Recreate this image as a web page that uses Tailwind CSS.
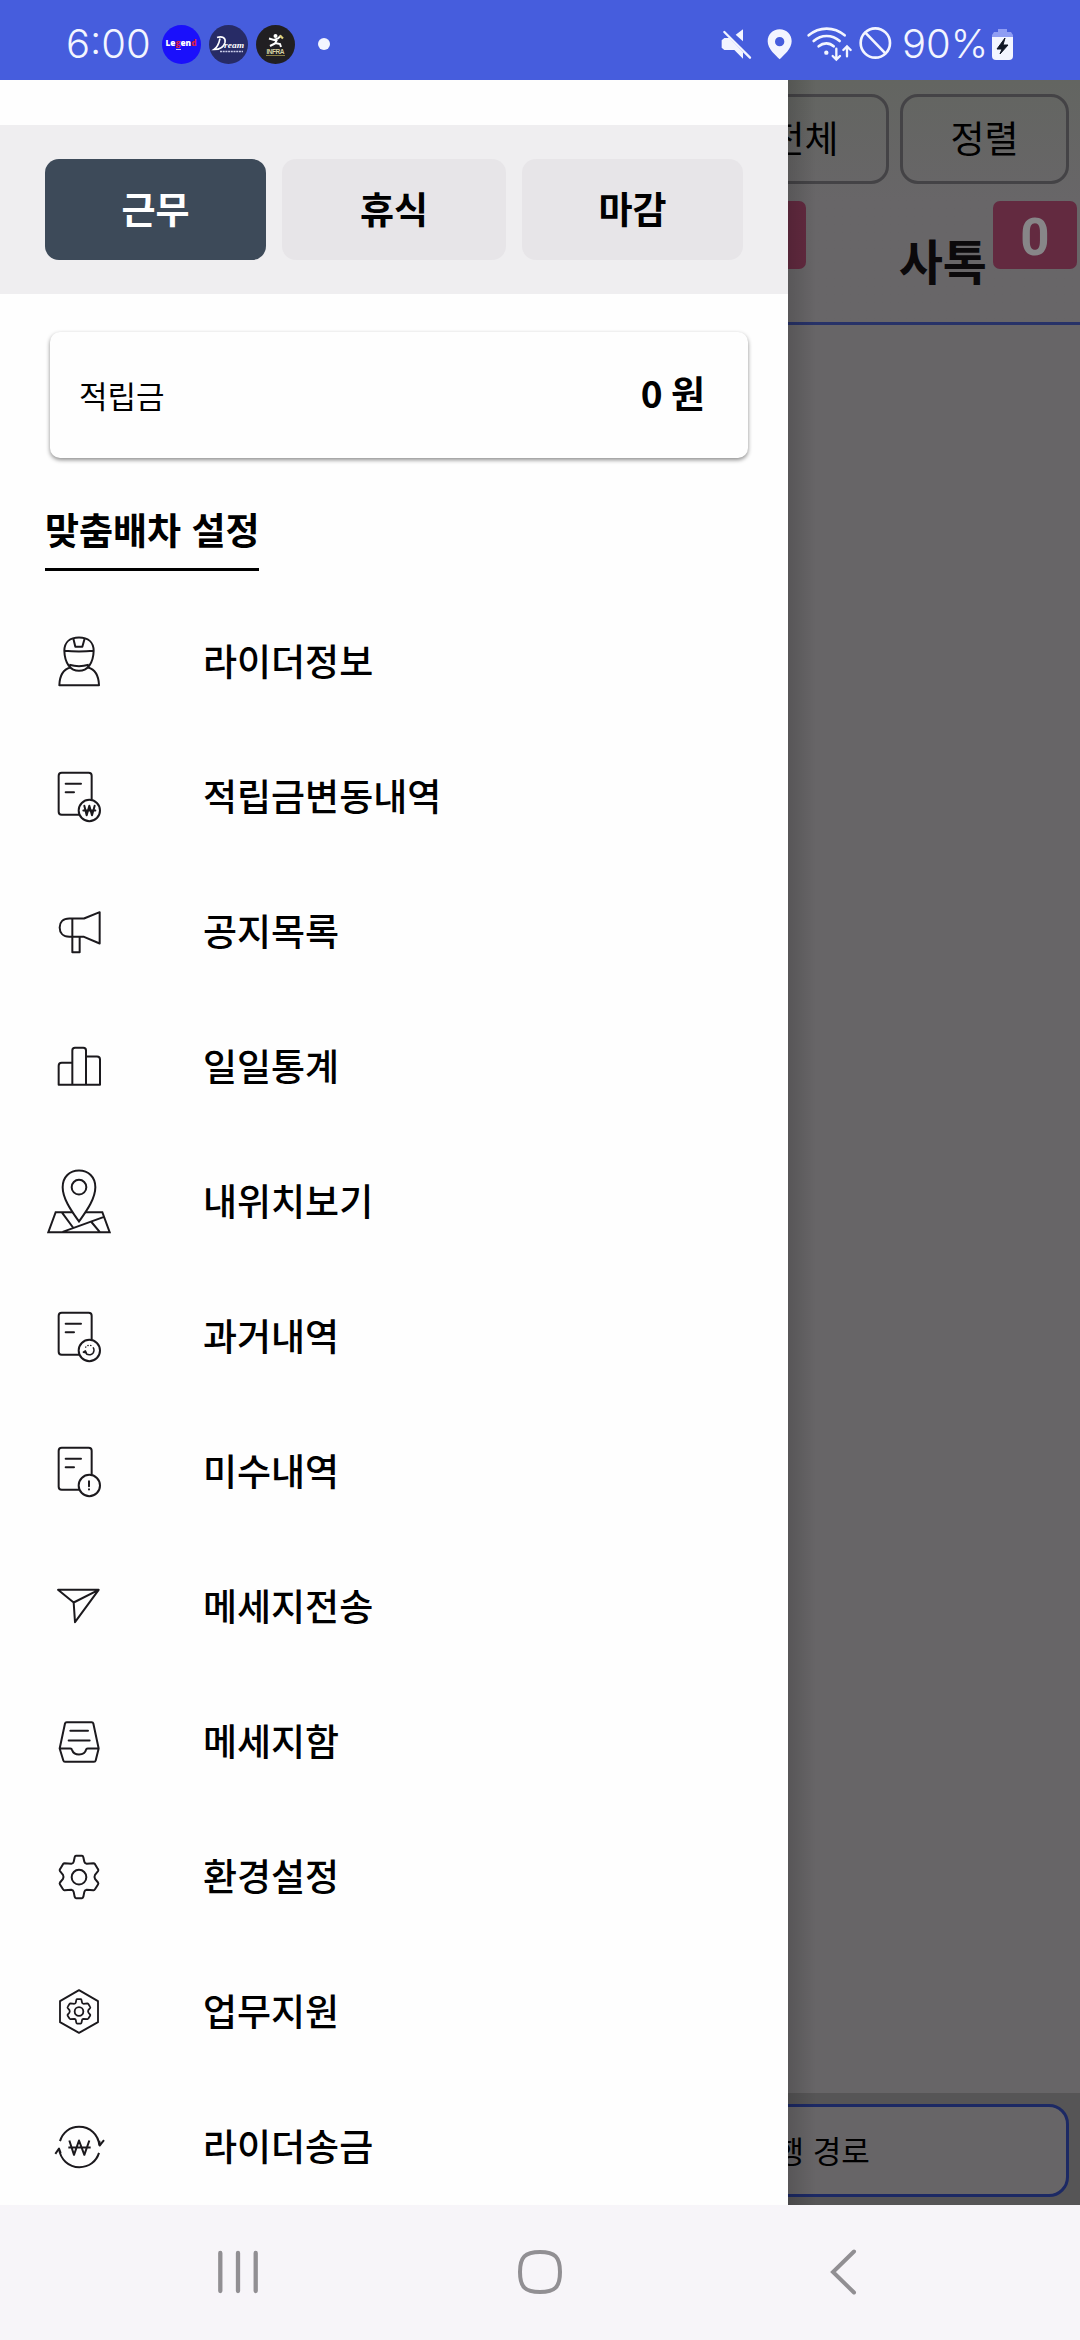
<!DOCTYPE html>
<html lang="ko">
<head>
<meta charset="utf-8">
<title>맞춤배차 설정</title>
<script src="https://cdn.jsdelivr.net/npm/@tailwindcss/browser@4"></script>
</head>
<body class="flex h-[2340px] w-[1080px] flex-col overflow-hidden bg-white font-['Noto_Sans_CJK_KR',sans-serif] text-black">

<!-- Status bar -->
<header class="flex h-20 shrink-0 items-center bg-[#465ddd] pt-2 pr-[67px] pl-[66px] font-['Inter',sans-serif] text-[40px] leading-none text-[#f3f5ff]">
  <span class="w-[96px] font-[350]">6:00</span>
  <div class="flex items-center gap-2">
    <svg class="size-[39px]" viewBox="0 0 39 39"><circle cx="19.5" cy="19.5" r="19.5" fill="#1a10fb"/><text x="3.5" y="21" font-family="Open Sans" font-size="9.500" font-weight="800" fill="#fff" textLength="31" lengthAdjust="spacingAndGlyphs">Le<tspan fill="#d81f48">g</tspan>en<tspan fill="#d81f48">d</tspan></text><path d="M14 24.500h5" stroke="#c9c3ff" stroke-width="1"/></svg>
    <svg class="size-[39px]" viewBox="0 0 39 39"><circle cx="19.500" cy="19.500" r="19.500" fill="#272b66"/><path d="M8 12.500c5-1.500 9 0 8 5-1 4-5 7-11 7 3-2 5-6 6-11" fill="none" stroke="#fff" stroke-width="1.600"/><text x="15" y="23" font-family="Liberation Serif" font-size="9" font-style="italic" font-weight="700" fill="#fff" textLength="20" lengthAdjust="spacingAndGlyphs">ream</text><path d="M11 26.500h23" stroke="#c9cbe8" stroke-width="1.300" stroke-dasharray="2 .7"/></svg>
    <svg class="size-[39px]" viewBox="0 0 39 39"><circle cx="19.500" cy="19.500" r="19.500" fill="#211f22"/><circle cx="19.500" cy="11" r="2" fill="#fff"/><path d="M13 13.500l5 1.500 4-1.500 3-3M21 14.500l-2 4-5 2.500M19 18l5 1 1 3" fill="none" stroke="#fff" stroke-width="2"/><path d="M24 10.500l3 3" stroke="#e0d27a" stroke-width="2.200"/><text x="10.500" y="28.500" font-family="Liberation Sans" font-size="6.500" font-weight="700" fill="#d8d1a2" textLength="18">INFRA</text><path d="M10 30.500h19" stroke="#8a7f45" stroke-width="1"/></svg>
  </div>
  <span class="ml-[23px] size-3 rounded-full bg-[#f3f5ff]"></span>
  <div class="ml-auto flex items-center">
    <svg class="h-9 w-[174px]" viewBox="115 77 522 108" fill="none" stroke="#f3f5ff" stroke-width="7" stroke-linecap="round">
      <path d="M120 120l8-7h15l41 43v19l-26-26h-30l-8-7z" fill="#f3f5ff" stroke="none"/>
      <path d="M184 87v36l-22-20z" fill="#f3f5ff" stroke="none"/>
      <path d="M128 95l77 77"/>
      <path fill-rule="evenodd" d="M294 87c-21 0-36 15-36 36 0 23 24 42 36 54 12-12 36-31 36-54 0-21-15-36-36-36zm0 23a14 14 0 1 1 0 28 14 14 0 0 1 0-28z" fill="#f3f5ff" stroke="none"/>
      <path d="M381 105c32-27 76-27 108 0M396 122c23-20 55-20 78 0M411 138c14-12 32-12 45 0" stroke-width="8"/>
      <circle cx="434" cy="157" r="6.500" fill="#f3f5ff" stroke="none"/>
      <path d="M464 145v32M453 167l11 11 11-11M496 168v-30M485 149l11-11 11 11" stroke-width="7"/>
      <circle cx="581" cy="128" r="44" stroke-width="8"/><path d="M551 97l60 62" stroke-width="8"/>
    </svg>
    <span class="ml-[8px] w-[90px] font-[350]">90%</span>
    <svg class="h-[31px] w-[21px]" viewBox="0 0 21 31"><path d="M6 0h9v3h4l2 3v2H0V6l2-3h4z" fill="#8f9df3"/><path d="M0 8h21v19q0 4-4 4H4q-4 0-4-4z" fill="#f3f5ff"/><path d="M13 9L5 20h5L8 25l8-9h-5z" fill="#101625" stroke="#101625" stroke-width="1"/></svg>
  </div>
</header>

<main class="relative h-[2125px] shrink-0 overflow-hidden bg-[#676567]">
  <!-- Dimmed order list behind the drawer -->
  <div class="flex h-full flex-col">
    <div class="flex h-[245px] shrink-0 flex-col border-b-3 border-[#273268] bg-linear-to-b from-[#636561] to-[#686668] to-50%">
      <div class="flex justify-end gap-[11px] pt-[14px] pr-[11px] text-[37px]">
        <div class="flex h-[90px] w-[169px] items-center justify-center rounded-[18px] border-3 border-[#444346] pb-1 leading-none"><span>전체</span></div>
        <div class="flex h-[90px] w-[169px] items-center justify-center rounded-[18px] border-3 border-[#444346] pb-1 leading-none"><span>정렬</span></div>
      </div>
      <div class="flex justify-end gap-[6px] pt-[17px] pr-[3px]">
        <div class="mr-[87px] h-[68px] w-[84px] rounded-[7px] bg-[#632a40]"></div>
        <span class="mt-[31px] text-[48px] leading-[54px] font-bold text-[#0b090b]">사톡</span>
        <div class="flex h-[68px] w-[84px] items-center justify-center rounded-[7px] bg-[#632a40] pt-1 font-['Roboto',sans-serif] text-[51px] leading-none font-bold text-[#878688]">0</div>
      </div>
    </div>
    <div class="flex-1"></div>
    <div class="h-[112px] shrink-0 bg-[#565556] pt-[11px] pr-[11px]">
      <div class="flex h-[93px] items-center rounded-[20px] border-3 border-[#1c2964] bg-[#676567] pb-0.5 pl-[744px] text-[31px] leading-none"><span>운행 경로</span></div>
    </div>
  </div>

  <!-- Drawer -->
  <aside class="absolute top-0 left-0 flex h-full w-[788px] flex-col bg-[#fefefe] pt-[45px]">
    <div class="flex h-[169px] shrink-0 items-center gap-4 bg-[#efeef0] pl-[45px] text-[37px] leading-none font-bold">
      <button class="h-[101px] w-[221px] rounded-[14px] bg-[#3d4a59] pb-0.5 text-white">근무</button>
      <button class="h-[101px] w-[224px] rounded-[14px] bg-[#e7e5e8] pb-0.5">휴식</button>
      <button class="h-[101px] w-[221px] rounded-[14px] bg-[#e7e5e8] pb-0.5">마감</button>
    </div>
    <div class="mt-[38px] ml-[50px] flex h-[126px] w-[698px] shrink-0 items-center justify-between rounded-[10px] bg-[#fefefe] pr-[43px] pl-[29px] leading-none shadow-[0_2px_4px_rgba(0,0,0,0.45)]">
      <span class="pb-[2px] text-[31px]">적립금</span>
      <span class="pb-[6px] text-[37px] font-bold [word-spacing:-2px]">0 원</span>
    </div>
    <h1 class="mt-[41px] ml-[45px] h-[72px] w-[214px] shrink-0 border-b-3 border-black pt-[9px] text-[37px] leading-[42px] font-bold whitespace-nowrap">맞춤배차 설정</h1>
    <nav class="mt-[23px] flex flex-col text-[37px] leading-none font-medium">
      <a class="flex h-[135px] shrink-0 items-center gap-[88px] pl-[43px]">
        <svg class="size-[72px]" viewBox="39 46.5 216 216" fill="none" stroke="#1b191d" stroke-width="6" stroke-linejoin="round"><path d="M103 121c0-26 17-40 44-40s44 14 44 40q-44 4-88 0zM103 121c1 38 19 60 44 60s43-22 44-60M118 163q29 8 58 0M130 84l6 25h21l7-25M121 171c-22 6-32 25-33 53h119c-1-28-11-47-33-53"/></svg>
        <span class="pb-0.5">라이더정보</span>
      </a>
      <a class="flex h-[135px] shrink-0 items-center gap-[88px] pl-[43px]">
        <svg class="size-[72px]" viewBox="39 451.5 216 216" fill="none" stroke="#1b191d" stroke-width="6" stroke-linecap="round" stroke-linejoin="round"><path d="M146 613H95q-9 0-9-9V496q0-9 9-9h81q9 0 9 9v70M107 520h46M107 545h25"/><circle cx="178" cy="600" r="32"/><path d="M163 586l7 28 8-28 8 28 8-28M160 600h36"/></svg>
        <span class="pb-0.5">적립금변동내역</span>
      </a>
      <a class="flex h-[135px] shrink-0 items-center gap-[88px] pl-[43px]">
        <svg class="size-[72px]" viewBox="39 856.5 216 216" fill="none" stroke="#1b191d" stroke-width="6" stroke-linejoin="round"><path d="M127 924h35l47-19v94l-47-20h-44c-19 0-29-12-29-28s10-27 29-27zM127 924v101h22v-45"/></svg>
        <span class="pb-0.5">공지목록</span>
      </a>
      <a class="flex h-[135px] shrink-0 items-center gap-[88px] pl-[43px]">
        <svg class="size-[72px]" viewBox="39 61.5 216 216" fill="none" stroke="#1b191d" stroke-width="6" stroke-linejoin="round"><path d="M127 157H95q-9 0-9 9v57h124v-76q0-9-9-9h-33M127 223V120q0-8 8-8h25q8 0 8 8v103"/></svg>
        <span class="pb-0.5">일일통계</span>
      </a>
      <a class="flex h-[135px] shrink-0 items-center gap-[88px] pl-[43px]">
        <svg class="size-[72px]" viewBox="39 466.5 216 216" fill="none" stroke="#1b191d" stroke-width="6" stroke-linejoin="miter"><path d="M147 633c-18-26-49-66-49-103 0-31 21-50 49-50s49 19 49 50c0 37-31 77-49 103z"/><circle cx="147" cy="530" r="22"/><path d="M129 605H77L55 665h184l-22-60h-51M95 605l34 46M98 664l122-44M183 633l26 31"/></svg>
        <span class="pb-0.5">내위치보기</span>
      </a>
      <a class="flex h-[135px] shrink-0 items-center gap-[88px] pl-[43px]">
        <svg class="size-[72px]" viewBox="39 871.5 216 216" fill="none" stroke="#1b191d" stroke-width="6" stroke-linecap="round" stroke-linejoin="round"><path d="M146 1033H95q-9 0-9-9V916q0-9 9-9h81q9 0 9 9v70M107 940h46M107 965h25"/><circle cx="178" cy="1020" r="32"/><path d="M166 1026a14 14 0 0 0 26-6q0-5-2-8M160 1025l6-4 3 6z" stroke-width="4.500"/><path d="M167 1010a15 15 0 0 1 20-3" stroke-width="4" stroke-dasharray="1 7"/></svg>
        <span class="pb-0.5">과거내역</span>
      </a>
      <a class="flex h-[135px] shrink-0 items-center gap-[88px] pl-[43px]">
        <svg class="size-[72px]" viewBox="39 76.5 216 216" fill="none" stroke="#1b191d" stroke-width="6" stroke-linecap="round" stroke-linejoin="round"><path d="M146 238H95q-9 0-9-9V121q0-9 9-9h81q9 0 9 9v70M107 145h46M107 170h25"/><circle cx="178" cy="225" r="32"/><path d="M177 212v15M177 236v1"/></svg>
        <span class="pb-0.5">미수내역</span>
      </a>
      <a class="flex h-[135px] shrink-0 items-center gap-[88px] pl-[43px]">
        <svg class="size-[72px]" viewBox="39 481.5 216 216" fill="none" stroke="#1b191d" stroke-width="6" stroke-linejoin="round"><path d="M84 538h122l-71 97-4-59zM131 576l75-38"/></svg>
        <span class="pb-0.5">메세지전송</span>
      </a>
      <a class="flex h-[135px] shrink-0 items-center gap-[88px] pl-[43px]">
        <svg class="size-[72px]" viewBox="39 886.5 216 216" fill="none" stroke="#1b191d" stroke-width="6" stroke-linecap="round" stroke-linejoin="round"><path d="M110 935h75q4 0 5 4l16 75-9 36q-1 4-5 4h-87q-4 0-5-4l-11-36 16-75q1-4 5-4zM89 1014h32q4 0 5 4c3 9 11 14 21 14s19-5 21-14q1-4 5-4h33M121 961h53M116 990h63"/></svg>
        <span class="pb-0.5">메세지함</span>
      </a>
      <a class="flex h-[135px] shrink-0 items-center gap-[88px] pl-[43px]">
        <svg class="size-[72px]" viewBox="39 91.5 216 216" fill="none" stroke="#1b191d" stroke-width="6" stroke-linejoin="round"><path d="M138 136h18q3 0 4 4l3 14q1 5 7 6l20-2q3 0 5 3l9 15q2 3 0 6l-9 11q-3 6 0 12l9 11q2 3 0 6l-9 14q-2 4-5 3l-20-1q-6 1-7 6l-3 15q-1 4-4 4h-18q-3 0-4-4l-3-15q-1-5-7-6l-20 1q-3 1-5-3l-9-14q-2-3 0-6l9-11q3-6 0-12l-9-11q-2-3 0-6l9-15q2-3 5-3l20 2q6-1 7-6l3-14q1-4 4-4z"/><circle cx="147" cy="200" r="22"/></svg>
        <span class="pb-0.5">환경설정</span>
      </a>
      <a class="flex h-[135px] shrink-0 items-center gap-[88px] pl-[43px]">
        <svg class="size-[72px]" viewBox="39 496.5 216 216" fill="none" stroke="#1b191d" stroke-width="5.500" stroke-linejoin="round"><path d="M147 539l57 33v63l-57 32-57-32v-63z"/><path transform="translate(60 487) scale(.59 .58)" stroke-width="9" d="M138 136h18q3 0 4 4l3 14q1 5 7 6l20-2q3 0 5 3l9 15q2 3 0 6l-9 11q-3 6 0 12l9 11q2 3 0 6l-9 14q-2 4-5 3l-20-1q-6 1-7 6l-3 15q-1 4-4 4h-18q-3 0-4-4l-3-15q-1-5-7-6l-20 1q-3 1-5-3l-9-14q-2-3 0-6l9-11q3-6 0-12l-9-11q-2-3 0-6l9-15q2-3 5-3l20 2q6-1 7-6l3-14q1-4 4-4z"/><circle cx="147" cy="603" r="13"/></svg>
        <span class="pb-0.5">업무지원</span>
      </a>
      <a class="flex h-[135px] shrink-0 items-center gap-[88px] pl-[43px]">
        <svg class="size-[72px]" viewBox="39 901.5 216 216" fill="none" stroke="#1b191d" stroke-width="6" stroke-linejoin="round"><path d="M90 992c8-26 29-43 57-43 33 0 58 22 61 56M208 991l1 14 13-16M207 1027c-8 26-30 43-59 43-32 0-57-23-61-56M76 1030l11-16 5 14M118 990l14 43 15-43 16 43 15-43M115 1011h67"/></svg>
        <span class="pb-0.5">라이더송금</span>
      </a>
    </nav>
  </aside>
  <div class="absolute top-0 left-[788px] h-full w-7 bg-linear-to-r from-black/15 to-transparent"></div>
</main>

<!-- System navigation -->
<footer class="flex h-[135px] shrink-0 items-center bg-[#f7f5f9] pb-0.5 pl-[217px]">
  <svg class="h-[44px] w-[42px]" viewBox="0 0 42 44" stroke="#918f93" stroke-width="4.300" stroke-linecap="round"><path d="M3.300 3v38M21 3v38M38.700 3v38"/></svg>
  <svg class="ml-[258px] size-[46px]" viewBox="0 0 46 46" fill="none" stroke="#918f93" stroke-width="4"><path d="M23 3c15 0 20 5 20 20s-5 20-20 20S3 38 3 23 8 3 23 3z"/></svg>
  <svg class="ml-[267px] h-[46px] w-[27px]" viewBox="0 0 27 46" fill="none" stroke="#918f93" stroke-width="4" stroke-linecap="round" stroke-linejoin="miter"><path d="M24 2.500L3 23l21 20.500"/></svg>
</footer>
</body>
</html>
